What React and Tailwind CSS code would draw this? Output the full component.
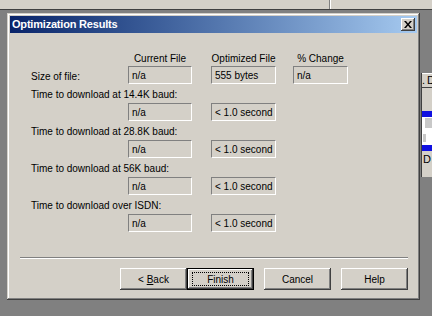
import React from 'react'

const ROWS = [
  { label: 'Time to download at 14.4K baud:', cur: 'n/a', opt: '< 1.0 second' },
  { label: 'Time to download at 28.8K baud:', cur: 'n/a', opt: '< 1.0 second' },
  { label: 'Time to download at 56K baud:', cur: 'n/a', opt: '< 1.0 second' },
  { label: 'Time to download over ISDN:', cur: 'n/a', opt: '< 1.0 second' },
]

const raised =
  'shadow-[inset_-1px_-1px_0_#404040,inset_1px_1px_0_#ffffff,inset_-2px_-2px_0_#808080,inset_2px_2px_0_#d4d0c8]'

function Field({ children, className = '' }) {
  return (
    <div
      className={`flex h-[18px] items-center border border-t-[#808080] border-l-[#808080] border-r-white border-b-white pl-[3px] whitespace-nowrap ${className}`}
    >
      {children}
    </div>
  )
}

function Button({ children, primary }) {
  if (primary) {
    return (
      <div className="h-[22px] w-[67px] border border-black bg-[#d4d0c8]">
        <div className={`flex h-full w-full items-center justify-center ${raised}`}>
          <div className="flex h-[14px] w-[57px] items-center justify-center border border-dotted border-black">
            {children}
          </div>
        </div>
      </div>
    )
  }
  return (
    <div className={`flex h-[22px] w-[67px] items-center justify-center bg-[#d4d0c8] ${raised}`}>
      {children}
    </div>
  )
}

function CloseButton() {
  return (
    <div className={`flex h-[13px] w-[14px] items-center justify-center bg-[#d4d0c8] ${raised}`}>
      <svg width="8" height="7" viewBox="0 0 8 7">
        <path d="M0 0h2l2 2.5 2-2.5h2L5 3.5 8 7H6L4 4.5 2 7H0l3-3.5z" fill="#000" />
      </svg>
    </div>
  )
}

export default function App() {
  return (
    <div className="relative h-[316px] w-[432px] overflow-hidden bg-[#808080] font-['Liberation_Sans',Arial,sans-serif] text-[10px] text-black">
      {/* strip of the window behind */}
      <div className="flex h-[10px] border-b border-[#404040] bg-[#d4d0c8]">
        <div className="w-[329px]" />
        <div className="w-px bg-[#808080]" />
        <div className="w-px bg-white" />
      </div>

      <div className="flex">
        {/* dialog */}
        <div
          className={`ml-[7px] mt-[3px] flex h-[287px] w-[413px] flex-col bg-[#d4d0c8] p-[3px] shadow-[inset_-1px_-1px_0_#404040,inset_1px_1px_0_#d4d0c8,inset_-2px_-2px_0_#808080,inset_2px_2px_0_#ffffff]`}
        >
          <div className="flex h-[17px] items-center justify-between bg-linear-to-r from-[#0a246a] to-[#a6caf0] pl-[2px] pr-[2px]">
            <span className="text-[11px] font-bold tracking-[-0.2px] text-white">Optimization Results</span>
            <CloseButton />
          </div>

          <div className="flex flex-col pl-[21px]">
            <div className="mt-[20px] flex h-[12px] items-center leading-[12px]">
              <div className="w-[97px]" />
              <div className="w-[64px] text-center whitespace-nowrap">Current File</div>
              <div className="w-[19px]" />
              <div className="w-[65px] text-center whitespace-nowrap">Optimized File</div>
              <div className="w-[17px]" />
              <div className="w-[55px] text-center whitespace-nowrap">% Change</div>
            </div>

            <div className="mt-[1px] flex items-center">
              <div className="w-[97px] pt-[2px]">Size of file:</div>
              <Field className="w-[64px]">n/a</Field>
              <div className="w-[19px]" />
              <Field className="w-[65px]">555 bytes</Field>
              <div className="w-[17px]" />
              <Field className="w-[55px]">n/a</Field>
            </div>

            {ROWS.map((r) => (
              <div key={r.label} className="flex flex-col">
                <div className="mt-[4px] h-[14px] leading-[14px] whitespace-nowrap">{r.label}</div>
                <div className="mt-[1px] flex">
                  <div className="w-[97px]" />
                  <Field className="w-[64px]">{r.cur}</Field>
                  <div className="w-[19px]" />
                  <Field className="w-[65px]">{r.opt}</Field>
                </div>
              </div>
            ))}
          </div>

          <div className="ml-[10px] mt-[25px] w-[388px] border-t border-b border-t-[#808080] border-b-white" />

          <div className="mt-[9px] flex">
            <div className="w-[110px]" />
            <div className="flex">
              <Button>
                <span>
                  &lt; <span className="underline">B</span>ack
                </span>
              </Button>
              <Button primary>Finish</Button>
            </div>
            <div className="ml-[10px]">
              <Button>Cancel</Button>
            </div>
            <div className="ml-[10px]">
              <Button>Help</Button>
            </div>
          </div>
        </div>

        {/* window partly hidden at the right */}
        <div className="ml-px mt-[63px] flex h-[104px] w-[11px] flex-col border-l border-[#404040] bg-[#d4d0c8]">
          <div className="flex h-[15px] items-center border-t border-white border-b border-b-[#404040] text-[11px] leading-none">
            <span className="w-[3px]">.</span>
            <span className="mx-[1px] h-[12px] w-px bg-[#808080]" />
            <span>D</span>
          </div>
          <div className="h-[23px]" />
          <div className="h-[6px] bg-[#1010e0]" />
          <div className="flex h-[28px] flex-col bg-white">
            <div className="ml-[3px] mt-[1px] h-[10px] w-[8px] bg-[#c8c8c8]" />
            <div className="ml-[1px] mt-[6px] h-[8px] w-[3px] bg-[#c8c8c8]" />
          </div>
          <div className="h-[6px] bg-[#1010e0]" />
          <div className="pl-[1px] pt-[3px] text-[11px] leading-none">D</div>
        </div>
      </div>
    </div>
  )
}
